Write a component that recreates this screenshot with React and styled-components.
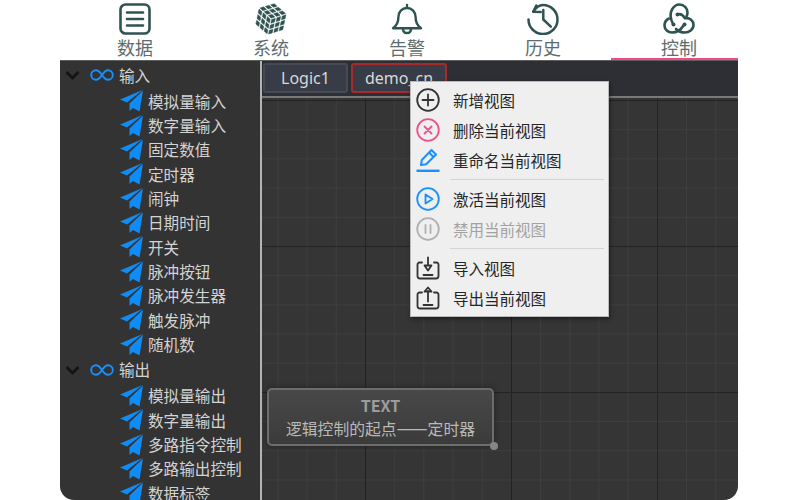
import React from "react";
import styled, { createGlobalStyle } from "styled-components";

const Global = createGlobalStyle`
  html, body { margin: 0; padding: 0; background: #fff; }
  body { font-family: "Noto Sans", "Noto Sans CJK SC", sans-serif; }
`;

const Page = styled.div`
  width: 800px;
  height: 500px;
  padding-left: 60px;
  box-sizing: border-box;
  overflow: hidden;
`;
const Shell = styled.div`
  width: 678px;
  height: 500px;
  display: flex;
  flex-direction: column;
  overflow: hidden;
  border-radius: 0 0 14px 14px;
`;
const Nav = styled.nav`
  height: 60px;
  flex: none;
  display: flex;
  padding-left: 7px;
  background: #fff;
`;
const NavItem = styled.div`
  width: 136px;
  flex: none;
  box-sizing: border-box;
  height: 60px;
  display: flex;
  flex-direction: column;
  align-items: center;
  padding-top: 3px;
  color: #5d6d6e;
  font-size: 18px;
  box-shadow: ${(p) => (p.$active ? "inset 0 -2px 0 #ee4a85" : "none")};
  svg { display: block; flex: none; }
`;
const NavLabel = styled.span`
  flex: none;
  line-height: 24px;
  margin-top: 1px;
`;
const Body = styled.div`
  flex: 1;
  min-height: 0;
  display: flex;
  border-top: 1px solid #5e5e5e;
`;
const Sidebar = styled.aside`
  width: 200px;
  flex: none;
  padding-top: 1px;
  background: #333333;
  overflow: hidden;
  color: #d4d4d4;
  font-size: 15.6px;
`;
const HeadRow = styled.div`
  height: 26px;
  display: flex;
  align-items: center;
  padding-left: 5px;
  padding-bottom: 1px;
  svg { flex: none; }
`;
const HeadLabel = styled.span`
  margin-left: 5px;
`;
const ChildRow = styled.div`
  height: 24.35px;
  display: flex;
  align-items: center;
  padding-left: 60px;
  gap: 5px;
  white-space: nowrap;
  svg { flex: none; }
`;
const Divider = styled.div`
  width: 2px;
  flex: none;
  background: #b4b4b4;
`;
const Work = styled.main`
  flex: 1;
  min-width: 0;
  display: flex;
  flex-direction: column;
  position: relative;
`;
const TabBar = styled.div`
  height: 37px;
  flex: none;
  box-sizing: border-box;
  display: flex;
  gap: 3px;
  padding: 2px 0 0 1px;
  background: #2d2f34;
  border-bottom: 2px solid #77797d;
`;
const Tab = styled.div`
  height: 30px;
  box-sizing: border-box;
  padding: 0 ${(p) => (p.$active ? "12px" : "16px")};
  display: flex;
  align-items: center;
  background: #373c46;
  border: 2px solid ${(p) => (p.$active ? "#a92a2c" : "#454a54")};
  border-radius: 3px;
  color: #d8d8d8;
  font-size: 16px;
`;
const Canvas = styled.div`
  flex: 1;
  position: relative;
  background-color: #353535;
  background-image:
    linear-gradient(#232323 1px, transparent 1px),
    linear-gradient(90deg, #232323 1px, transparent 1px),
    linear-gradient(#3e3e3e 1px, transparent 1px),
    linear-gradient(90deg, #3e3e3e 1px, transparent 1px);
  background-size: 146px 146px, 146px 146px, 29.2px 29.2px, 29.2px 29.2px;
  background-position: 0 2px, 103px 0, 0 2px, 103px 0;
`;
const Node = styled.div`
  position: absolute;
  left: 5px;
  top: 290px;
  width: 227px;
  height: 58px;
  box-sizing: border-box;
  border: 2px solid #6d6d6d;
  border-radius: 5px;
  background: linear-gradient(#484848, #3b3b3b);
  box-shadow: 0 0 6px rgba(0, 0, 0, 0.35);
  text-align: center;
  color: #b9b9b9;
  font-family: "Noto Sans CJK SC", sans-serif;
  font-size: 15.8px;
  line-height: 22px;
  padding-top: 4px;
  white-space: nowrap;
`;
const NodeTitle = styled.div`
  color: #9c9c9c;
  font-weight: 700;
  font-size: 16px;
  line-height: 22px;
  margin-bottom: 2px;
`;
const NodeDash = styled.span`
  font-size: 18.5px;
  line-height: 1;
`;
const Port = styled.span`
  position: absolute;
  right: -6px;
  bottom: -6px;
  width: 8px;
  height: 8px;
  border-radius: 50%;
  background: #858585;
`;
const Menu = styled.div`
  position: absolute;
  left: 148px;
  top: 20px;
  width: 199px;
  height: 236px;
  box-sizing: border-box;
  padding: 3px 0 1px;
  background: #efefef;
  border: 1px solid #b9b9b9;
  box-shadow: 1px 2px 4px rgba(0, 0, 0, 0.45);
  color: #222;
  font-size: 15.5px;
`;
const MenuItem = styled.div`
  height: 30px;
  display: flex;
  align-items: center;
  padding-left: 5px;
  gap: 13px;
  color: ${(p) => (p.$disabled ? "#a2a2a2" : "#262626")};
  svg { flex: none; }
`;
const Sep = styled.div`
  height: 1px;
  margin: 4px 4px 4px 39px;
  background: #d4d4d4;
`;

const C = "#2f5350";

const DataIcon = () => (
  <svg width="32" height="32" viewBox="0 0 32 32" fill="none" stroke={C} strokeWidth="2.6" strokeLinecap="round">
    <rect x="1.5" y="1.5" width="29" height="29" rx="5" />
    <path d="M8 9.5h16M8 16h16M8 22.500h16" />
  </svg>
);

const cubeCells = () => {
  const o = [16, 16];
  const h = [[16, -0.5], [30.5, 7.5], [30.5, 24.5], [16, 32.5], [1.5, 24.5], [1.5, 7.5]];
  const faces = [
    [h[0], h[1], o, h[5]],
    [h[5], o, h[3], h[4]],
    [o, h[1], h[2], h[3]],
  ];
  const lerp = (a, b, t) => [a[0] + (b[0] - a[0]) * t, a[1] + (b[1] - a[1]) * t];
  const out = [];
  faces.forEach(([a, b, c, d]) => {
    for (let i = 0; i < 3; i++) {
      for (let j = 0; j < 3; j++) {
        const g = 0.05;
        const pt = (u, v) => lerp(lerp(a, b, u), lerp(d, c, u), v);
        const u0 = i / 3 + g, u1 = (i + 1) / 3 - g, v0 = j / 3 + g, v1 = (j + 1) / 3 - g;
        const p = [pt(u0, v0), pt(u1, v0), pt(u1, v1), pt(u0, v1)];
        out.push(p.map((q) => q.map((n) => n.toFixed(2)).join(",")).join(" "));
      }
    }
  });
  return out;
};

const CubeIcon = () => (
  <svg width="32" height="32" viewBox="0 0 32 32" fill={C} stroke={C} strokeWidth="0.4" strokeLinejoin="round" overflow="visible">
    <g transform="rotate(12 16 16)">
      {cubeCells().map((p, i) => (
        <polygon key={i} points={p} />
      ))}
    </g>
  </svg>
);

const BellIcon = () => (
  <svg width="32" height="32" viewBox="0 0 32 32" fill="none" stroke={C} strokeWidth="2.4" strokeLinecap="round" strokeLinejoin="round">
    <path d="M16 2v3M16 5c-5 0-8.600 3.800-8.600 9 0 5.800-1.800 8.800-5.400 11.200h28c-3.600-2.400-5.400-5.400-5.400-11.200 0-5.200-3.600-9-8.600-9z" />
    <path d="M12 25.400c0 3 1.800 4.600 4 4.600s4-1.600 4-4.600" />
  </svg>
);

const HistoryIcon = () => (
  <svg width="32" height="32" viewBox="0 0 32 32" fill="none" stroke={C} strokeWidth="2.5" strokeLinecap="round" strokeLinejoin="round">
    <path d="M6.300 8.700C9 4.300 12.500 2 16 2A14.500 14.500 0 1 1 1.500 16.500" />
    <path d="M9.300 2.500L6.300 8.700l7.400.3" />
    <path d="M16.300 7v9.500l7.500 7.200" />
  </svg>
);

const ControlIcon = () => (
  <svg width="32" height="32" viewBox="0 0 32 32" fill="none" stroke={C} strokeWidth="2.6" strokeLinecap="round">
    <path d="M10 21C7 15 7 10 9 6.500C11 3 14 1.500 16.500 1.500C21 1.500 24.500 5 24.500 9.500C24.500 11 24 12.500 23.500 13.500" />
    <path d="M14.500 11.500C18 10 20 12 22 15.200C27 14.500 30.500 18 30.500 22C30.500 26.500 26 29.500 22 29.500C18 29.500 15 28 13 26" />
    <path d="M6 15.500C3 17 1.500 19.500 1.500 22.500C1.500 26.500 5 29.500 9 29.500C14 29.500 18 26.500 20.500 22.500" />
    <circle cx="10.500" cy="21.500" r="2" fill={C} stroke="none" />
    <circle cx="21.500" cy="21.500" r="2" fill={C} stroke="none" />
    <circle cx="14.500" cy="11.500" r="2" fill={C} stroke="none" />
  </svg>
);

const Chevron = () => (
  <svg width="15" height="14" viewBox="0 0 15 14" fill="none" stroke="#141414" strokeWidth="2.8">
    <path d="M1.500 4l6 6 6-6" />
  </svg>
);
const InfinityIcon = () => (
  <svg width="24" height="12" viewBox="0 0 24 12" fill="none" stroke="#1890ff" strokeWidth="1.900" style={{ marginLeft: 10 }}>
    <path d="M12 6C10 3 8.500 1.200 6 1.200a4.800 4.800 0 0 0 0 9.600C8.500 10.800 10 9 12 6c2-3 3.500-4.800 6-4.800a4.800 4.800 0 0 1 0 9.600C15.500 10.800 14 9 12 6z" />
  </svg>
);
const Plane = () => (
  <svg width="23" height="22" viewBox="0 0 23 22" fill="#0f8cf5">
    <path d="M0 9.500L22.500 0 7 12.500z" />
    <path d="M9.500 13.500L23 0.500 19.500 21.500l-6.500-3.500-3.500 3z" />
  </svg>
);

const Round = ({ color, children }) => (
  <svg width="24" height="24" viewBox="0 0 24 24" fill="none" stroke={color} strokeWidth="1.800" strokeLinecap="round" strokeLinejoin="round">
    <circle cx="12" cy="12" r="10.800" />
    {children}
  </svg>
);
const PencilIcon = () => (
  <svg width="24" height="24" viewBox="0 0 24 24" fill="none" stroke="#1890ff" strokeWidth="2" strokeLinejoin="round">
    <path d="M5 17l.8-5L15.500 2l4.500 4.500L10.200 16.300z" />
    <path d="M13 4.500l4.500 4.500" />
    <path d="M0.500 22.800h23" strokeWidth="2.400" />
  </svg>
);
const Tray = ({ up }) => (
  <svg width="24" height="24" viewBox="0 0 24 24" fill="none" stroke="#333" strokeWidth="1.800" strokeLinecap="round" strokeLinejoin="round">
    <path d="M6 6.500H3.500a2 2 0 0 0-2 2v11.500a2.500 2.500 0 0 0 2.500 2.500h16a2.500 2.500 0 0 0 2.500-2.500V8.500a2 2 0 0 0-2-2H18" />
    <path d="M7.500 19h9" />
    {up ? (
      <path d="M12 15.500V5M8.500 5.500L12 1.500l3.500 4z" />
    ) : (
      <path d="M12 1.500v7.500M8.500 9.500h7L12 14.500z" />
    )}
  </svg>
);

const inputs = ["模拟量输入", "数字量输入", "固定数值", "定时器", "闹钟", "日期时间", "开关", "脉冲按钮", "脉冲发生器", "触发脉冲", "随机数"];
const outputs = ["模拟量输出", "数字量输出", "多路指令控制", "多路输出控制", "数据标签"];
const navs = [
  ["数据", <DataIcon />],
  ["系统", <CubeIcon />],
  ["告警", <BellIcon />],
  ["历史", <HistoryIcon />],
  ["控制", <ControlIcon />],
];

const Group = ({ title, items }) => (
  <>
    <HeadRow>
      <Chevron />
      <InfinityIcon />
      <HeadLabel>{title}</HeadLabel>
    </HeadRow>
    {items.map((t) => (
      <ChildRow key={t}>
        <Plane />
        <span>{t}</span>
      </ChildRow>
    ))}
  </>
);

export default function App() {
  return (
    <Page>
      <Global />
      <Shell>
        <Nav>
          {navs.map(([label, icon], i) => (
            <NavItem key={label} $active={i === 4}>
              {icon}
              <NavLabel>{label}</NavLabel>
            </NavItem>
          ))}
        </Nav>
        <Body>
          <Sidebar>
            <Group title="输入" items={inputs} />
            <Group title="输出" items={outputs} />
          </Sidebar>
          <Divider />
          <Work>
            <TabBar>
              <Tab>Logic1</Tab>
              <Tab $active>demo_cn</Tab>
            </TabBar>
            <Canvas>
              <Node>
                <NodeTitle>TEXT</NodeTitle>
                逻辑控制的起点<NodeDash>——</NodeDash>定时器
                <Port />
              </Node>
            </Canvas>
            <Menu>
              <MenuItem>
                <Round color="#333"><path d="M12 6.500v11M6.500 12h11" /></Round>
                新增视图
              </MenuItem>
              <MenuItem>
                <Round color="#f0508a"><path d="M8.500 8.500l7 7M15.500 8.500l-7 7" /></Round>
                删除当前视图
              </MenuItem>
              <MenuItem>
                <PencilIcon />
                重命名当前视图
              </MenuItem>
              <Sep />
              <MenuItem>
                <Round color="#1890ff"><path d="M9.500 7.500l7 4.500-7 4.500z" /></Round>
                激活当前视图
              </MenuItem>
              <MenuItem $disabled>
                <Round color="#b0b0b0"><path d="M9.500 8v8M14.500 8v8" /></Round>
                禁用当前视图
              </MenuItem>
              <Sep />
              <MenuItem>
                <Tray />
                导入视图
              </MenuItem>
              <MenuItem>
                <Tray up />
                导出当前视图
              </MenuItem>
            </Menu>
          </Work>
        </Body>
      </Shell>
    </Page>
  );
}
